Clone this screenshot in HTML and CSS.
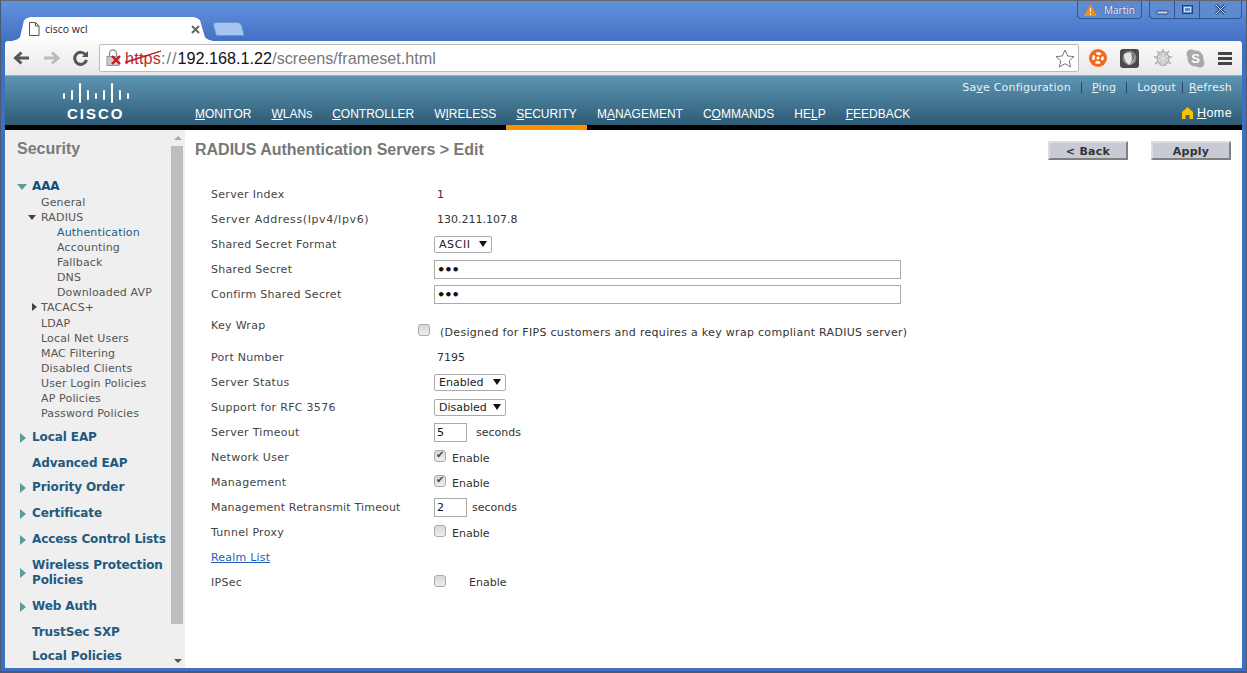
FILE: index.html
```html
<!DOCTYPE html>
<html>
	<head>
		<meta charset="UTF-8">
		<title>cisco wcl</title>
		<link rel="stylesheet" href="styles.css">
	</head>
	<body>
		<div class="window">
			<div class="titlebar">
				<div class="tab">
					<svg class="tabicon" width="12" height="14" viewBox="0 0 12 14"><path d="M1.500 .5h6l3.500 3.500v9.500h-9.500z M7.500 .5v3.500h3.500" fill="#fff" stroke="#555"/></svg>
					<span class="tabtitle">cisco wcl</span>
					<svg class="tabclose" width="9" height="9" viewBox="0 0 9 9"><path d="M1 1l7 7M8 1l-7 7" stroke="#666" stroke-width="2"/></svg>
				</div>
				<div class="newtab"></div>
				<div class="spacer"></div>
				<div class="user">
					<svg width="13" height="12" viewBox="0 0 13 12"><path d="M6.500 0l6.500 12h-13z" fill="#f28c1c"/><path d="M6.500 4v4M6.500 9v2" stroke="#fff"/></svg>
					<span>Martin</span>
				</div>
				<div class="wincontrols">
					<span class="winbtn"><svg width="13" height="10" viewBox="0 0 13 10"><rect x="1" y="6" width="11" height="3" rx="1" fill="#cfdcf2" stroke="#2b4a80"/></svg></span>
					<span class="winbtn"><svg width="13" height="11" viewBox="0 0 13 11"><rect x="1.500" y="1.500" width="10" height="8" fill="none" stroke="#24406f"/><rect x="3.500" y="3.500" width="6" height="4" fill="none" stroke="#cfdcf2"/></svg></span>
					<span class="winbtn winclose"><svg width="13" height="11" viewBox="0 0 13 11"><path d="M2 1l9 9M11 1l-9 9" stroke="#24406f" stroke-width="2.500"/><path d="M2 1l9 9M11 1l-9 9" stroke="#dfe8f7"/></svg></span>
				</div>
			</div>

			<div class="toolbar">
				<svg class="navicon" width="18" height="16" viewBox="0 0 18 16"><path d="M17 8h-12M9.500 2.500l-6 5.500 6 5.500" fill="none" stroke="#555" stroke-width="3"/></svg>
				<svg class="navicon" width="18" height="16" viewBox="0 0 18 16"><path d="M2 8h12M10 2.500l6 5.500-6 5.500" fill="none" stroke="#bbb" stroke-width="3"/></svg>
				<svg class="navicon" width="18" height="16" viewBox="0 0 18 16"><path d="M14.500 10a6 6 0 1 1-.8-5" fill="none" stroke="#555" stroke-width="3"/><path d="M16 1v6h-6z" fill="#555"/></svg>
				<div class="omnibox">
					<svg class="lock" width="19" height="18" viewBox="0 0 19 18"><path d="M3.500 8v-3.500a3.500 3.500 0 0 1 7 0v3.500" fill="none" stroke="#999" stroke-width="1.500"/><rect x="1" y="7.500" width="12" height="9" fill="#c9c9c9" stroke="#999"/><path d="M6 7l8 8M14 7l-8 8" stroke="#c8141a" stroke-width="2.200"/></svg>
					<span class="url"><span class="scheme">https<svg class="strike" width="38" height="18" viewBox="0 0 38 18"><path d="M0 15l36-11M0 16l36-12" stroke="#c8141a" fill="none"/></svg></span><span class="urlgrey colons">://</span>192.168.1.22<span class="urlgrey">/screens/frameset.html</span></span>
					<svg class="star" width="20" height="19" viewBox="0 0 20 19"><path d="M10 1l2.700 6 6.300.6-4.800 4.200 1.500 6.200-5.700-3.300-5.700 3.300 1.500-6.200-4.800-4.200 6.300-.6z" fill="#fff" stroke="#777"/></svg>
				</div>
				<div class="extensions">
					<svg width="18" height="18" viewBox="0 0 18 18"><circle cx="9" cy="9" r="9" fill="#f26a21"/><circle cx="9" cy="9" r="4.500" fill="none" stroke="#fff" stroke-width="2.500" stroke-dasharray="4.500 2.570" stroke-dashoffset="2.200"/><circle cx="9" cy="9" r="1.500" fill="#fff"/></svg>
					<svg width="19" height="19" viewBox="0 0 19 19"><rect width="19" height="19" rx="3" fill="#4a4a4a"/><circle cx="9.500" cy="9" r="7" fill="#8a8a8a"/><path d="M4 5q6-3 11 0q0 8-5.500 11q-5.500-3-5.500-11z" fill="#e6e6e6"/><path d="M11 4q3 0 4 1q0 6-5.500 11q4-5 1.500-12z" fill="#777"/></svg>
					<svg width="20" height="20" viewBox="0 0 20 20"><path d="M4 3l3 3M16 3l-3 3M1 9h4M19 9h-4M2 16l4-3M18 16l-4-3M10 1v3" stroke="#aaa" stroke-width="1.500"/><ellipse cx="10" cy="10.500" rx="6" ry="7" fill="#c8c8c8" stroke="#a5a5a5"/><path d="M5 8l10 5M15 8l-10 5M10 4v13" stroke="#e8e8e8"/></svg>
					<svg width="19" height="19" viewBox="0 0 19 19"><circle cx="9.500" cy="9.500" r="8" fill="#a9a9a9"/><circle cx="5" cy="5" r="4.500" fill="#a9a9a9"/><circle cx="14" cy="14" r="4.500" fill="#a9a9a9"/><text class="skype" x="9.500" y="14" text-anchor="middle">S</text></svg>
					<span class="menu"><i></i><i></i><i></i></span>
				</div>
			</div>

			<div class="banner">
				<div class="logo">
					<svg width="70" height="22" viewBox="0 0 70 22">
						<g stroke="#fff" stroke-width="2" stroke-linecap="round">
							<path d="M2 12v4M10 9v8M18 2v18M26 9v8M34 12v4M42 9v8M50 2v18M58 9v8M66 12v4"/>
						</g>
					</svg>
					<span class="logotext">CISCO</span>
				</div>
				<div class="bannerright">
					<div class="toplinks">
						<a class="toplink">Sa<u>v</u>e Configuration</a>
						<span class="sep"></span>
						<a class="toplink"><u>P</u>ing</a>
						<span class="sep"></span>
						<a class="toplink">Lo<u>g</u>out</a>
						<span class="sep sep-near"></span>
						<a class="toplink"><u>R</u>efresh</a>
					</div>
					<div class="mainnav">
						<a class="navitem"><u>M</u>ONITOR</a>
						<a class="navitem"><u>W</u>LANs</a>
						<a class="navitem"><u>C</u>ONTROLLER</a>
						<a class="navitem">W<u>I</u>RELESS</a>
						<a class="navitem active"><u>S</u>ECURITY</a>
						<a class="navitem">M<u>A</u>NAGEMENT</a>
						<a class="navitem">C<u>O</u>MMANDS</a>
						<a class="navitem">HE<u>L</u>P</a>
						<a class="navitem"><u>F</u>EEDBACK</a>
						<div class="spacer"></div>
						<a class="home">
							<svg width="11" height="12" viewBox="0 0 11 12"><path d="M5.500 0l5.500 5v7h-3.500v-4h-4v4h-3.500v-7z" fill="#f5c400"/></svg>
							<span><u>H</u>ome</span>
						</a>
					</div>
				</div>
			</div>

			<div class="main">
				<div class="sidebar">
					<div class="sidenav">
						<h2 class="sidetitle">Security</h2>

						<div class="group group-open"><span class="arrow-down"></span>AAA</div>
						<ul class="sub">
							<li>General</li>
							<li class="parent"><span class="arrow-small-down"></span>RADIUS</li>
							<li class="child current">Authentication</li>
							<li class="child">Accounting</li>
							<li class="child">Fallback</li>
							<li class="child">DNS</li>
							<li class="child">Downloaded AVP</li>
							<li class="parent"><span class="arrow-small-right"></span>TACACS+</li>
							<li class="gap">LDAP</li>
							<li>Local Net Users</li>
							<li>MAC Filtering</li>
							<li>Disabled Clients</li>
							<li>User Login Policies</li>
							<li>AP Policies</li>
							<li>Password Policies</li>
						</ul>

						<div class="group"><span class="arrow-right"></span>Local EAP</div>
						<div class="group group-tight">Advanced EAP</div>
						<div class="group"><span class="arrow-right"></span>Priority Order</div>
						<div class="group"><span class="arrow-right"></span>Certificate</div>
						<div class="group"><span class="arrow-right"></span>Access Control Lists</div>
						<div class="group"><span class="arrow-right"></span>Wireless Protection<br>Policies</div>
						<div class="group"><span class="arrow-right"></span>Web Auth</div>
						<div class="group group-tight">TrustSec SXP</div>
						<div class="group group-tight">Local Policies</div>
					</div>
					<div class="scrollbar">
						<span class="scrollup"></span>
						<div class="thumb"></div>
						<span class="scrolldown"></span>
					</div>
				</div>

				<div class="content">
					<div class="pagehead">
						<h1 class="pagetitle">RADIUS Authentication Servers &gt; Edit</h1>
						<div class="actions">
							<button class="btn">&lt; Back</button>
							<button class="btn">Apply</button>
						</div>
					</div>

					<div class="form">
						<div class="row"><label>Server Index</label><span class="val">1</span></div>
						<div class="row"><label class="wide-label">Server Address(Ipv4/Ipv6)</label><span class="val">130.211.107.8</span></div>
						<div class="row"><label>Shared Secret Format</label><span class="select sel-ascii">ASCII</span></div>
						<div class="row"><label>Shared Secret</label><span class="input input-wide">•••</span></div>
						<div class="row"><label>Confirm Shared Secret</label><span class="input input-wide">•••</span></div>
						<div class="row row-keywrap"><label>Key Wrap</label><span class="check"></span><span class="note">(Designed for FIPS customers and requires a key wrap compliant RADIUS server)</span></div>
						<div class="row"><label>Port Number</label><span class="val">7195</span></div>
						<div class="row"><label>Server Status</label><span class="select sel-state">Enabled</span></div>
						<div class="row"><label>Support for RFC 3576</label><span class="select sel-state">Disabled</span></div>
						<div class="row"><label>Server Timeout</label><span class="input input-num">5</span><span class="unit unit-far">seconds</span></div>
						<div class="row"><label>Network User</label><span class="check on"></span><span class="unit">Enable</span></div>
						<div class="row"><label>Management</label><span class="check on"></span><span class="unit">Enable</span></div>
						<div class="row"><label class="tight-label">Management Retransmit Timeout</label><span class="input input-num">2</span><span class="unit">seconds</span></div>
						<div class="row"><label>Tunnel Proxy</label><span class="check"></span><span class="unit">Enable</span></div>
						<div class="row"><a class="link">Realm List</a></div>
						<div class="row"><label>IPSec</label><span class="check"></span><span class="unit unit-wide">Enable</span></div>
					</div>
				</div>
			</div>
		</div>
	</body>
</html>
```

FILE: styles.css
```css
*{
	padding:0;
	margin:0;
	box-sizing:border-box;
}
html,body{
	width:1247px;
	height:673px;
	overflow:hidden;
}
body{
	font-family:"DejaVu Sans",Verdana,sans-serif;
	font-size:11px;
	color:#222;
}
u{
	text-decoration:underline;
}
ul,li{
	list-style:none;
}
.spacer{
	flex:1;
}
.window{
	width:1247px;
	height:673px;
	display:flex;
	flex-direction:column;
	padding:0 4px 3px;
	background:#3e6fc0;
	border:1px solid #4a5a70;
	border-bottom-width:2px;
	border-top-color:#666;
}

/* browser frame */
.titlebar{
	height:40px;
	margin:0 -4px;
	padding:0 4px 0 11px;
	display:flex;
	align-items:flex-start;
	flex-shrink:0;
	background:linear-gradient(#6292de,#4470c4);
}
.tab{
	width:201px;
	height:24px;
	margin-top:16px;
	padding:0 13px 0 16px;
	display:flex;
	align-items:center;
	background:#fff;
	clip-path:polygon(0 100%,5px 94%,8px 84%,12px 14%,15px 4%,19px 0,calc(100% - 20px) 0,calc(100% - 16px) 4%,calc(100% - 13px) 14%,calc(100% - 8px) 84%,calc(100% - 5px) 94%,100% 100%);
	font-family:"Open Sans",sans-serif;
	font-size:10.500px;
	color:#222;
}
.tabtitle{
	flex:1;
	margin-left:5px;
}
.newtab{
	width:29px;
	height:14px;
	margin:21px 0 0 1px;
	background:#a5c5f0;
	border:1px solid #6f94cf;
	border-radius:4px 4px 2px 2px;
	transform:skewX(15deg);
}
.user{
	width:65px;
	height:18px;
	margin-right:7px;
	display:flex;
	align-items:center;
	justify-content:center;
	gap:7px;
	border:1px solid #2f568f;
	border-top:0;
	border-radius:0 0 4px 4px;
	background:#5f8ad0;
	font-family:"Open Sans",sans-serif;
	font-size:10px;
	color:#f3f3f3;
	text-shadow:0 0 2px #24406f;
}
.wincontrols{
	height:18px;
	display:flex;
	border:1px solid #2f568f;
	border-top:0;
	border-radius:0 0 4px 4px;
	background:#5f8ad0;
}
.winbtn{
	width:25px;
	display:flex;
	align-items:center;
	justify-content:center;
	border-right:1px solid #2f568f;
}
.winclose{
	width:41px;
	border-right:0;
}
.toolbar{
	height:35px;
	padding:0 10px 0 7px;
	display:flex;
	align-items:center;
	flex-shrink:0;
	background:linear-gradient(#fbfbfb,#e8e8e8);
	border-bottom:1px solid #aaa;
	border-radius:3px 3px 0 0;
}
.navicon{
	margin-right:12px;
}
.omnibox{
	width:980px;
	height:28px;
	margin-left:-3px;
	padding:0 3px 0 6px;
	display:flex;
	align-items:center;
	flex-shrink:0;
	background:#fff;
	border:1px solid #bbb;
	border-radius:2px;
}
.url{
	flex:1;
	font-family:"Liberation Sans",Arial,sans-serif;
	font-size:16.200px;
	color:#111;
}
.scheme{
	position:relative;
	letter-spacing:.2px;
	color:#b03030;
}
.strike{
	position:absolute;
	left:0;
	top:-2px;
}
.urlgrey{
	color:#777;
}
.colons{
	letter-spacing:1px;
}
.extensions{
	flex:1;
	padding-left:10px;
	display:flex;
	align-items:center;
	justify-content:space-between;
}
.skype{
	font-family:"Liberation Sans",Arial,sans-serif;
	font-size:13px;
	font-weight:bold;
	fill:#fff;
}
.menu{
	width:14px;
	display:flex;
	flex-direction:column;
	gap:2px;
}
.menu i{
	height:3px;
	background:#444;
}

/* banner */
.banner{
	height:49px;
	display:flex;
	flex-shrink:0;
	background:linear-gradient(#5c96b3,#2e5a75);
}
.logo{
	width:180px;
	padding:6px 0 0 57px;
	display:flex;
	flex-direction:column;
	align-items:flex-start;
}
.logotext{
	margin:2px 0 0 5px;
	font-family:"Liberation Sans",Arial,sans-serif;
	font-size:15px;
	font-weight:bold;
	line-height:16px;
	letter-spacing:2px;
	color:#fff;
}
.bannerright{
	flex:1;
	display:flex;
	flex-direction:column;
}
.toplinks{
	height:22px;
	padding:0 10px 0 0;
	display:flex;
	align-items:center;
	justify-content:flex-end;
	color:#e9f2f7;
}
.toplink{
	font-size:11px;
	letter-spacing:.2px;
}
.sep{
	width:1px;
	height:11px;
	margin:0 10px;
	background:#26456f;
}
.sep-near{
	margin:0 6px;
}
.mainnav{
	height:27px;
	padding-right:10px;
	display:flex;
	align-items:stretch;
}
.navitem{
	position:relative;
	padding:8px 10px 0;
	font-family:"Liberation Sans",Arial,sans-serif;
	font-size:12px;
	line-height:16px;
	color:#fff;
}
.active:after{
	content:"";
	position:absolute;
	left:0;
	right:0;
	top:100%;
	height:5px;
	background:#ff9000;
}
.home{
	padding-top:7px;
	display:flex;
	align-items:flex-start;
	gap:4px;
	font-family:"Liberation Sans",Arial,sans-serif;
	font-size:12.500px;
	line-height:16px;
	letter-spacing:.4px;
	color:#fff;
}
.home svg{
	margin-top:2px;
}

/* page */
.main{
	flex:1;
	min-height:0;
	display:flex;
	border-top:5px solid #000;
	background:#fff;
}
.sidebar{
	width:180px;
	flex-shrink:0;
	display:flex;
	background:#efefef;
	overflow:hidden;
}
.sidenav{
	width:166px;
	padding:9px 0 0 12px;
	overflow:hidden;
}
.sidetitle{
	margin-bottom:20px;
	font-family:"Liberation Sans",Arial,sans-serif;
	font-size:16px;
	line-height:20px;
	color:#7a7a7a;
}
.group{
	position:relative;
	padding-left:15px;
	margin-bottom:11px;
	font-size:12px;
	font-weight:bold;
	line-height:15px;
	letter-spacing:-.1px;
	white-space:nowrap;
	color:#1f5a80;
}
.group-tight{
	margin-bottom:9px;
}
.group-open{
	margin-bottom:1px;
	color:#0d4f7c;
}
.arrow-down,.arrow-right,.arrow-small-down,.arrow-small-right{
	position:absolute;
	width:0;
	height:0;
}
.arrow-down{
	left:0;
	top:5px;
	border-left:5px solid transparent;
	border-right:5px solid transparent;
	border-top:6px solid #5a9b9e;
}
.arrow-right{
	left:3px;
	top:50%;
	margin-top:-5px;
	border-top:5px solid transparent;
	border-bottom:5px solid transparent;
	border-left:6px solid #5a9b9e;
}
.sub{
	margin:0 0 9px 24px;
}
.sub li{
	position:relative;
	height:15px;
	line-height:15px;
	letter-spacing:.15px;
	color:#555;
}
.sub .gap{
	margin-top:1px;
}
.sub .child{
	padding-left:16px;
}
.sub .current{
	color:#1f5a80;
}
.arrow-small-down{
	left:-13px;
	top:5px;
	border-left:4px solid transparent;
	border-right:4px solid transparent;
	border-top:5px solid #444;
}
.arrow-small-right{
	left:-9px;
	top:3px;
	border-top:4px solid transparent;
	border-bottom:4px solid transparent;
	border-left:5px solid #444;
}
.scrollbar{
	width:14px;
	display:flex;
	flex-direction:column;
	align-items:center;
}
.scrollup,.scrolldown{
	width:0;
	height:0;
	flex-shrink:0;
	border-left:4px solid transparent;
	border-right:4px solid transparent;
}
.scrollup{
	margin-top:6px;
	border-bottom:4px solid #aaa;
}
.scrolldown{
	margin-top:auto;
	margin-bottom:5px;
	border-top:4px solid #555;
}
.thumb{
	width:12px;
	height:478px;
	margin-top:6px;
	margin-right:2px;
	background:#bdbdbd;
}

.content{
	flex:1;
	min-width:0;
	padding:0 11px 0 10px;
}
.pagehead{
	height:52px;
	display:flex;
	align-items:flex-start;
	justify-content:space-between;
}
.pagetitle{
	margin-top:10px;
	font-family:"Liberation Sans",Arial,sans-serif;
	font-size:16px;
	line-height:20px;
	color:#777;
}
.actions{
	display:flex;
	gap:23px;
	margin-top:11px;
}
.btn{
	width:80px;
	height:19px;
	padding-top:1px;
	font-family:"DejaVu Sans",Verdana,sans-serif;
	font-size:11px;
	font-weight:bold;
	letter-spacing:.3px;
	color:#333;
	background:#c8cad6;
	border:2px solid;
	border-color:#ddd #808080 #808080 #ddd;
}
.form{
	padding-left:16px;
}
.row{
	height:25px;
	display:flex;
	align-items:center;
	line-height:15px;
}
.row label{
	width:223px;
	flex-shrink:0;
	letter-spacing:.3px;
	color:#444;
}
.row .wide-label{
	letter-spacing:.6px;
}
.row .tight-label{
	letter-spacing:.17px;
}
.row-keywrap{
	height:38px;
}
.row-keywrap label{
	width:207px;
	margin-top:-1px;
}
.row-keywrap .check{
	margin-top:7px;
}
.val{
	margin-left:3px;
	color:#333;
}
.select{
	height:17px;
	padding:0 3px 0 4px;
	display:flex;
	align-items:center;
	justify-content:space-between;
	background:#fff;
	border:1px solid #aaa;
	border-radius:2px;
	color:#222;
}
.select:after{
	content:"";
	width:0;
	height:0;
	margin:-2px 1px 0 0;
	border-left:4px solid transparent;
	border-right:4px solid transparent;
	border-top:6px solid #111;
}
.sel-ascii{
	width:58px;
	letter-spacing:.6px;
}
.sel-state{
	width:72px;
}
.input{
	height:19px;
	padding-left:2px;
	display:flex;
	align-items:center;
	background:#fff;
	border:1px solid #aaa;
	color:#111;
}
.input-wide{
	width:467px;
	letter-spacing:-1px;
	font-size:13px;
	font-weight:bold;
}
.input-num{
	width:33px;
	font-size:11px;
}
.check{
	position:relative;
	width:12px;
	height:12px;
	margin-top:-3px;
	background:linear-gradient(#d8d8d8,#eee);
	border:1px solid #aaa;
	border-radius:3px;
	flex-shrink:0;
}
.on:after{
	content:"✔";
	position:absolute;
	left:1px;
	top:-3px;
	font-size:10px;
	line-height:14px;
	color:#444;
}
.note{
	margin:13px 0 0 10px;
	letter-spacing:.3px;
	color:#333;
}
.unit{
	margin:2px 0 0 6px;
	color:#333;
}
.input-num + .unit{
	margin:0 0 0 5px;
}
.input-num + .unit-far{
	margin-left:9px;
}
.row .unit-wide{
	margin:0 0 0 23px;
}
.link{
	letter-spacing:.2px;
	color:#1f5fb8;
	text-decoration:underline;
}
```
